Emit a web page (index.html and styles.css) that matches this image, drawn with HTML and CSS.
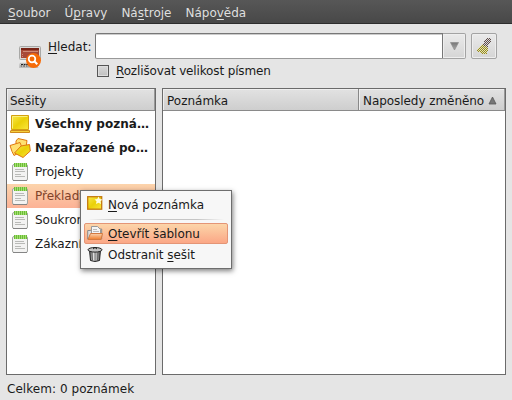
FILE: index.html
```html
<!DOCTYPE html>
<html lang="cs">
<head>
<meta charset="utf-8">
<title>Poznámky</title>
<link rel="stylesheet" href="styles.css">
</head>
<body>
<svg class="defs" width="0" height="0">
  <defs>
    <linearGradient id="yellow" x1="0" y1="0" x2="1" y2="1"><stop offset="0" stop-color="#fae94a"/><stop offset=".5" stop-color="#ead008"/><stop offset="1" stop-color="#fbe63c"/></linearGradient>
    <linearGradient id="tri" x1="0" y1="0" x2="0" y2="1"><stop offset="0" stop-color="#777"/><stop offset="1" stop-color="#aaa"/></linearGradient>
    <linearGradient id="folder" x1="0" y1="0" x2="0" y2="1"><stop offset="0" stop-color="#fbd3ae"/><stop offset="1" stop-color="#ef7d2c"/></linearGradient>
    <linearGradient id="bin" x1="0" y1="0" x2="1" y2="0"><stop offset="0" stop-color="#555"/><stop offset=".4" stop-color="#eee"/><stop offset="1" stop-color="#555"/></linearGradient>
    <pattern id="straw" width="2" height="2" patternUnits="userSpaceOnUse"><rect width="2" height="2" fill="#e4e0b8"/><rect width="1" height="1" fill="#948a20"/><rect x="1" y="1" width="1" height="1" fill="#948a20"/></pattern>
    <pattern id="handle" width="2" height="2" patternUnits="userSpaceOnUse"><rect width="2" height="2" fill="#dcdcdc"/><rect width="1" height="1" fill="#5e4a48"/><rect x="1" y="1" width="1" height="1" fill="#5e4a48"/></pattern>
    <symbol id="notebook" viewBox="0 0 20 22">
      <rect x="2.5" y="3.500" width="15" height="16" rx="1.5" fill="#f3f3f2" stroke="#a3a5a1"/>
      <path d="M3 19.500h14" stroke="#858585"/>
      <path d="M4 2h13v4H4z" fill="#a2df70"/>
      <path d="M4.500 2v4M6.500 2v4M8.500 2v4M10.500 2v4M12.500 2v4M14.500 2v4M16.500 2v4" stroke="#6cbc38"/>
      <path d="M5 8.500h9M5 10.500h10M5 13.500h6M5 15.500h10" stroke="#b9bab7"/>
    </symbol>
  </defs>
</svg>
<nav class="menubar">
  <span><u>S</u>oubor</span><span>Ú<u>p</u>ravy</span><span>Ná<u>s</u>troje</span><span>Nápo<u>v</u>ěda</span>
</nav>
<section class="search">
  <svg class="search-icon" width="24" height="24" viewBox="0 0 24 24">
    <rect x=".5" y=".5" width="21" height="13" rx="1" fill="#d9d9d7" stroke="#a8a8a6"/>
    <rect x="2" y="2" width="18" height="10" fill="#a84a38"/>
    <path d="M2 2h18v2H2z" fill="#782315"/>
    <path d="M4 5.500h15M3 8.500h1M3 10.500h1" stroke="#cf8b78"/>
    <path d="M1 14h20v2H1z" fill="#eee"/>
    <path d="M1 17.500h16l2 4H.5z" fill="#e8e8e6" stroke="#aaa" stroke-width=".7"/>
    <path d="M2 18.500h8M1.500 20h9" stroke="#222" stroke-width="1.2" stroke-dasharray="2 .6"/>
    <circle cx="14.500" cy="14.500" r="7.500" fill="#f66b08"/>
    <circle cx="13" cy="13" r="3.300" fill="none" stroke="#fff" stroke-width="1.700"/>
    <path d="M15.300 15.300l3 3" stroke="#fff" stroke-width="2"/>
  </svg>
  <label class="search-label" for="q"><u>H</u>ledat:</label>
  <div class="fields">
    <div class="field-row">
      <input class="entry" id="q" type="text">
      <button class="drop" aria-label="Historie"><svg width="9" height="9" viewBox="0 0 9 9"><path d="M.5 .5h8L4.500 8z" fill="url(#tri)" stroke="#8c8c8c" stroke-width=".7"/></svg></button>
      <button class="clear" aria-label="Vymazat">
        <svg width="16" height="18" viewBox="0 0 16 18" shape-rendering="crispEdges">
          <path d="M11 1h4v3l-4 7-5-3z" fill="url(#handle)"/>
          <path d="M6 7l6 4-1 6H7l-6-3v-2z" fill="url(#straw)"/>
        </svg>
      </button>
    </div>
    <div class="check-row"><span class="check"></span><span><u>R</u>ozlišovat velikost písmen</span></div>
  </div>
</section>
<main class="panes">
  <section class="pane side">
    <div class="head"><span class="col">Sešity</span></div>
    <div class="row strong">
      <svg width="22" height="22" viewBox="0 0 22 22"><path d="M2.500 2.500h17v14H2.500z" fill="url(#yellow)" stroke="#d3a010"/><path d="M3.500 15.500v-12h15" fill="none" stroke="#fbf07c"/><path d="M1.800 17.500h18.700v2H1.300z" fill="#f5cf3c" stroke="#cf8a1c" stroke-linejoin="round"/></svg>
      <span>Všechny pozná…</span>
    </div>
    <div class="row strong">
      <svg width="22" height="22" viewBox="0 0 22 22" fill="#ffe070" stroke="#e0780f" stroke-linejoin="round"><path d="M7 4l2-2.500 9 2-1 7-10-1z"/><path d="M1 8.500l10-3 3 8-9 5-2-4z"/><path d="M12 9l8.500-1.500.8 6.500-7.300 6.500-8.500-4.500z" fill="url(#yellow)"/></svg>
      <span>Nezařazené po…</span>
    </div>
    <div class="row"><svg width="20" height="22"><use href="#notebook"/></svg><span>Projekty</span></div>
    <div class="row selected"><svg width="20" height="22"><use href="#notebook"/></svg><span>Překlady</span></div>
    <div class="row"><svg width="20" height="22"><use href="#notebook"/></svg><span>Soukromé</span></div>
    <div class="row"><svg width="20" height="22"><use href="#notebook"/></svg><span>Zákazníci</span></div>
  </section>
  <section class="pane notes">
    <div class="head"><span class="col">Poznámka</span><span class="col date">Naposledy změněno <svg width="9" height="9" viewBox="0 0 9 9"><path d="M4.500 1L8 8H1z" fill="#777" stroke="#555" stroke-width=".8"/></svg></span></div>
  </section>
</main>
<footer class="status">Celkem: 0 poznámek</footer>
<div class="popup">
  <div class="item">
    <svg width="16" height="16" viewBox="0 0 16 16"><rect x=".7" y="1.700" width="14" height="12.500" fill="url(#yellow)" stroke="#c4790f" stroke-width="1.300"/><path d="M11.500 1.500l1.200 2.500 2.800.4-2 1.900.5 2.700-2.500-1.300L9 9l.5-2.700-2-1.900 2.800-.4z" fill="#fffce0"/></svg>
    <span><u>N</u>ová poznámka</span>
  </div>
  <div class="sep"></div>
  <div class="item active">
    <svg width="16" height="16" viewBox="0 0 16 16" stroke-linejoin="round"><path d="M.7 14V5.500h3l1-1.500h10V14z" fill="#ddd" stroke="#8b8b88"/><path d="M4.500 9V1.500h6l3 3V9z" fill="#f5f5f5" stroke="#999"/><path d="M6 4.500h4M6 6.500h6" stroke="#bbb"/><path d="M3.500 8.500h12l-1.500 6H1z" fill="url(#folder)" stroke="#d47a40"/></svg>
    <span><u>O</u>tevřít šablonu</span>
  </div>
  <div class="item last">
    <svg width="16" height="16" viewBox="0 0 16 16"><path d="M2.500 4h11l-1 10.500q-4.500 2-9 0z" fill="url(#bin)" stroke="#222"/><path d="M5 6l.5 8M8 6v9M11 6l-.5 8" stroke="#555" stroke-width=".8"/><ellipse cx="8" cy="3.800" rx="7" ry="2.300" fill="#c5c5c5" stroke="#222"/><path d="M6 3q2-3 4 0" fill="none" stroke="#222"/></svg>
    <span>Odstranit <u>s</u>ešit</span>
  </div>
</div>
</body>
</html>
```
FILE: styles.css
```css
* { box-sizing: border-box; }
body {
  margin: 0; width: 512px; height: 400px; overflow: hidden;
  display: flex; flex-direction: column;
  background: #e5e5e5; color: #1a1a1a;
  font: 12px/16px "DejaVu Sans", sans-serif;
}
svg { flex: none; display: block; }
.defs { position: absolute; }
u { text-decoration: underline; text-decoration-thickness: 1px; text-underline-offset: 2px; text-decoration-skip-ink: none; }
.menubar {
  height: 24px; flex: none; display: flex; gap: 14px; padding: 5px 8px 0;
  background: linear-gradient(#575757, #484848); border-bottom: 1px solid #2d2d2d; color: #dfdfdf;
}
.search { height: 64px; flex: none; display: flex; padding: 9px 15px 0 19px; }
.search-icon { margin-top: 13px; }
.search-label { margin: 6px 0 0 5px; width: 47px; white-space: nowrap; }
.fields { flex: 1; }
.field-row { display: flex; height: 26px; }
.entry { width: 348px; border: 1px solid #777; border-bottom-color: #999; border-radius: 2px 0 0 2px; background: #fff; padding: 2px 5px; font: inherit; outline: 0; box-shadow: inset 0 1px #ccc; }
.drop, .clear { display: flex; align-items: center; justify-content: center; padding: 0; border: 1px solid #a3a3a3; background: linear-gradient(#eaeaea, #d5d5d5); box-shadow: inset 0 0 0 1px #eee; }
.drop { width: 23px; border-left: 0; border-radius: 0 2px 2px 0; }
.clear { width: 26px; margin-left: 5px; border-radius: 2px; }
.check-row { display: flex; align-items: center; margin: 4px 0 0 2px; gap: 7px; letter-spacing: -.14px; }
.check { width: 12px; height: 12px; border: 1px solid #555; background: linear-gradient(#d8d8d8, #c0c0c0); box-shadow: inset 0 0 0 1px #ddd; }
.panes { display: flex; gap: 6px; height: 287px; flex: none; padding: 0 6px; }
.pane { border: 1px solid #6b6b6b; background: #fff; overflow: hidden; }
.side { width: 150px; }
.notes { flex: 1; }
.head { display: flex; height: 22px; margin-bottom: 1px; background: linear-gradient(#e2e2e2, #cecece); border-bottom: 1px solid #8a8a8a; }
.col { flex: 1; padding: 4px 0 0 3px; box-shadow: inset 1px 1px #efefef; }
.side .col { border-right: 1px solid #999; }
.notes .col { padding-left: 4px; }
.notes .date { flex: 0 0 147px; display: flex; gap: 4px; border-left: 1px solid #888; border-right: 1px solid #999; white-space: nowrap; letter-spacing: -.06px; }
.date svg { margin-top: 3px; }
.row { height: 24px; display: flex; align-items: center; padding-left: 3px; white-space: nowrap; }
.row span { margin-left: 5px; }
.row.strong { font-weight: bold; padding-left: 2px; }
.row.strong span { margin-left: 4px; letter-spacing: .06px; }
.selected { background: linear-gradient(#fcd4ac, #fcb296); color: #80432a; }
.status { padding: 6px 7px 0; letter-spacing: .05px; }
.popup {
  position: absolute; left: 80px; top: 190px; width: 152px; height: 79px;
  padding: 3px; background: #f7f7f7; border: 1px solid #6e6e6e;
  box-shadow: 1px 2px 5px rgba(0,0,0,.5); white-space: nowrap; letter-spacing: -.05px;
}
.item { height: 21px; display: flex; align-items: center; gap: 5px; padding-left: 3px; }
.item svg { margin-top: -3px; }
.sep { height: 1px; margin: 4px 4px 3px; background: linear-gradient(90deg, #f7f7f7, #c5c5c5 20%, #c5c5c5 80%, #f7f7f7); }
.active { background: linear-gradient(#fcd5a9, #fba786); border: 1px solid #e49576; border-radius: 2px; padding-left: 2px; }
.active svg, .last svg { margin-top: -1px; }
```
